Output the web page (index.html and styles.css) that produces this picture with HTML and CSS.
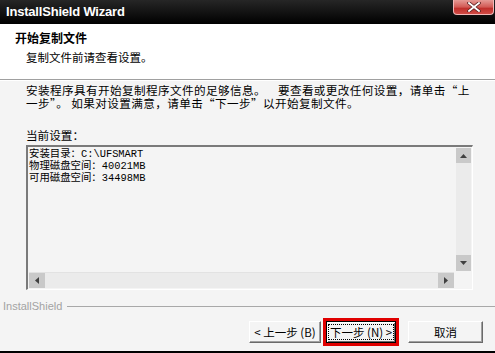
FILE: index.html
```html
<!DOCTYPE html>
<html lang="zh-CN">
<head>
<meta charset="utf-8">
<title>InstallShield Wizard</title>
<link rel="stylesheet" href="styles.css">
</head>
<body>
<div class="window">
  <div class="titlebar">
    <span class="title">InstallShield Wizard</span>
    <div class="close">
      <svg width="14" height="10" viewBox="0 0 14 10"><path d="M2 1 L12 9 M12 1 L2 9" stroke="#5a2020" stroke-width="3.4" stroke-linecap="square"/><path d="M2 1 L12 9 M12 1 L2 9" stroke="#fff" stroke-width="1.8" stroke-linecap="square"/></svg>
    </div>
  </div>
  <div class="header">
    <div class="h-title">开始复制文件</div>
    <div class="h-sub">复制文件前请查看设置。</div>
  </div>
  <div class="content">
    <p class="info"><span class="line">安装程序具有开始复制程序文件的足够信息。<span class="gap-l"></span>要查看或更改任何设置，请单击“上</span><span class="line">一步”。<span class="gap-s"></span>如果对设置满意，请单击“下一步”以开始复制文件。</span></p>
    <p class="label">当前设置：</p>
    <div class="listbox">
      <div class="lb-text">
        <div>安装目录：C:\UFSMART</div>
        <div>物理磁盘空间：40021MB</div>
        <div>可用磁盘空间：34498MB</div>
      </div>
      <div class="vscroll">
        <div class="sbtn"><svg width="7" height="4" viewBox="0 0 7 4"><path d="M0 4 L3.5 0 L7 4Z" fill="#404040"/></svg></div>
        <div class="track"></div>
        <div class="sbtn down"><svg width="7" height="4" viewBox="0 0 7 4"><path d="M0 0 L7 0 L3.5 4Z" fill="#404040"/></svg></div>
      </div>
      <div class="hscroll">
        <div class="sbtn"><svg width="4" height="7" viewBox="0 0 4 7"><path d="M4 0 L4 7 L0 3.5Z" fill="#404040"/></svg></div>
        <div class="track"></div>
        <div class="sbtn"><svg width="4" height="7" viewBox="0 0 4 7"><path d="M0 0 L4 3.5 L0 7Z" fill="#404040"/></svg></div>
      </div>
    </div>
  </div>
  <div class="brand">
    <span class="brand-text">InstallShield</span>
    <span class="brand-line"></span>
  </div>
  <div class="buttons">
    <button class="btn">&lt; 上一步 (B)</button>
    <button class="btn btn-default"><span class="focus">下一步 (N) &gt;</span></button>
    <button class="btn btn-cancel">取消</button>
  </div>
</div>
</body>
</html>
```
FILE: styles.css
```css
* { box-sizing: border-box; }
html, body { margin: 0; padding: 0; }
body {
  width: 495px;
  height: 353px;
  background: #000;
  overflow: hidden;
  font-family: "Noto Sans CJK SC", "Liberation Sans", sans-serif;
}
.window {
  height: 351px;
  background: #f4f4f4;
  display: flex;
  flex-direction: column;
}
.titlebar {
  height: 24px;
  background: linear-gradient(#262626, #000);
  display: flex;
  align-items: center;
  justify-content: space-between;
  padding-left: 6px;
}
.title {
  color: #fff;
  font-family: "Liberation Sans", sans-serif;
  font-weight: bold;
  font-size: 13px;
  letter-spacing: -0.2px;
  margin-top: -1px;
}
.close {
  align-self: flex-start;
  width: 41px;
  height: 15px;
  margin-right: 1px;
  border: 1px solid #f2b8b8;
  border-top: none;
  border-radius: 0 0 4px 4px;
  background: linear-gradient(#e59a95, #d25a55 50%, #c0302c 60%, #d04b45);
  display: flex;
  align-items: center;
  justify-content: center;
}
.header {
  height: 56px;
  background: #fff;
  border-bottom: 1px solid #a0a0a0;
  box-shadow: 0 1px 0 #fff;
  padding: 6px 0 0 15px;
}
.h-title {
  font-size: 12px;
  font-weight: bold;
  line-height: 16px;
  color: #000;
}
.h-sub {
  font-size: 11.5px;
  line-height: 16px;
  padding-left: 11px;
  margin-top: 3px;
  color: #000;
}
.content {
  padding-left: 26px;
}
.info {
  margin: 4px 0 0;
  font-size: 11.6px;
  line-height: 13px;
  letter-spacing: 0.4px;
  color: #000;
  white-space: nowrap;
}
.line {
  display: block;
}
.gap-l {
  display: inline-block;
  width: 12px;
}
.gap-s {
  display: inline-block;
  width: 3px;
}
.label {
  margin: 19px 0 0;
  font-size: 11.6px;
  line-height: 12px;
  color: #000;
}
.listbox {
  margin-top: 4px;
  width: 447px;
  height: 145px;
  border-top: 2px solid #7a7a7a;
  border-left: 2px solid #7a7a7a;
  border-right: 1px solid #fff;
  border-bottom: 1px solid #fff;
  padding: 1px;
  display: grid;
  grid-template-columns: 1fr 15px;
  grid-template-rows: 1fr 15px;
  gap: 2px;
}
.lb-text {
  font-family: "Liberation Mono", "Noto Sans CJK SC", monospace;
  font-size: 10.4px;
  line-height: 12px;
  color: #000;
}
.vscroll {
  display: flex;
  flex-direction: column;
  background: #ebebeb;
}
.hscroll {
  display: flex;
  background: #ebebeb;
  box-shadow: 0 -1px 0 #e2e2e2;
}
.track { flex: 1; }
.sbtn {
  width: 15px;
  height: 15px;
  background: #c9c9c9;
  display: flex;
  align-items: center;
  justify-content: center;
}
.sbtn.down { height: 16px; }
.hscroll .sbtn { width: 16px; }
.brand {
  display: flex;
  align-items: center;
  margin-top: 10px;
  padding-left: 3px;
  height: 12px;
}
.brand-text {
  font-family: "Liberation Sans", sans-serif;
  font-size: 11px;
  color: #a3a3a3;
}
.brand-line {
  flex: 1;
  height: 1px;
  margin-left: 5px;
  background: #a8a8a8;
}
.buttons {
  display: flex;
  justify-content: flex-end;
  padding-right: 12px;
  margin-top: 9px;
}
.btn {
  height: 22px;
  width: 72px;
  padding: 0;
  font-family: "Noto Sans CJK SC", sans-serif;
  font-size: 11.5px;
  line-height: 12px;
  color: #000;
  background: #f4f4f4;
  border: 1px solid;
  border-color: #fff #6a6a6a #6a6a6a #fff;
  box-shadow: inset -1px -1px 0 #a0a0a0;
  display: flex;
  align-items: center;
  justify-content: center;
  white-space: nowrap;
}
.btn-default {
  width: 70px;
  margin-left: 5px;
  border: 1px solid #000;
  outline: 3px solid #e00000;
  box-shadow: inset 1px 1px 0 #fff, inset -1px -1px 0 #6a6a6a;
}
.focus {
  border: 1px dotted #000;
  padding: 1px 1px;
  line-height: 12px;
}
.btn-cancel {
  width: 75px;
  margin-left: 12px;
}
```
